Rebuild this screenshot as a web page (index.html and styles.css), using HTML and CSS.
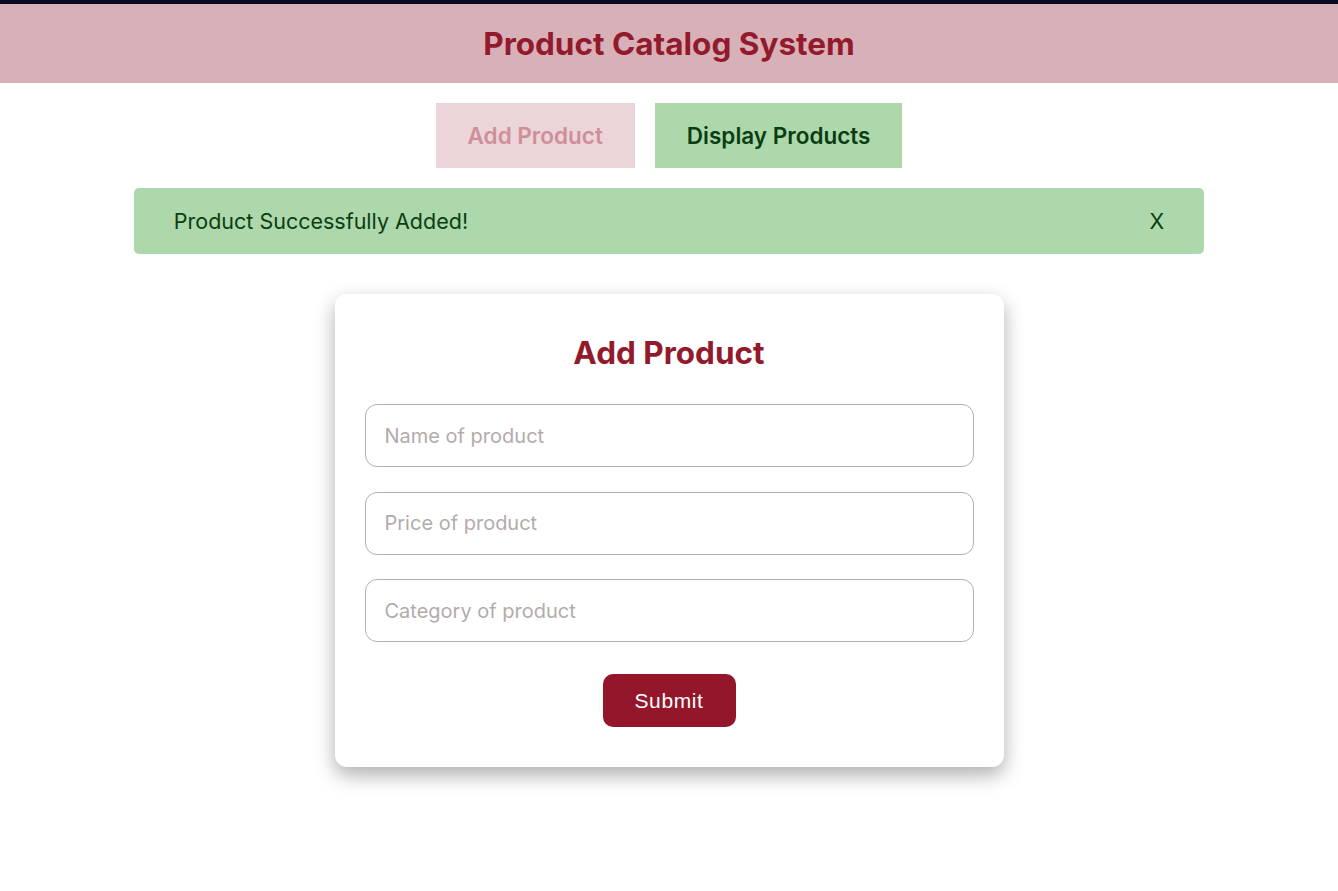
FILE: index.html
```html
<!DOCTYPE html>
<html>
<head>
<meta charset="utf-8">
<title>Product Catalog System</title>
<link rel="stylesheet" href="styles.css">
</head>
<body>
<div class="topline"></div>
<header class="header">
  <h1 class="header-title">Product Catalog System</h1>
</header>
<nav class="nav">
  <button class="nav-btn nav-btn-add">Add Product</button>
  <button class="nav-btn nav-btn-display">Display Products</button>
</nav>
<div class="alert">
  <span class="alert-text">Product Successfully Added!</span>
  <span class="alert-close">X</span>
</div>
<main class="card">
  <h2 class="card-title">Add Product</h2>
  <form class="form">
    <input class="field" type="text" placeholder="Name of product">
    <input class="field" type="text" placeholder="Price of product">
    <input class="field" type="text" placeholder="Category of product">
    <button class="submit" type="button">Submit</button>
  </form>
</main>
</body>
</html>
```
FILE: styles.css
```css
* { box-sizing: border-box; }
html, body { margin: 0; padding: 0; background: #fff; }
body { font-family: Inter, "Noto Sans", sans-serif; padding-bottom: 60px; }

.topline { height: 4px; background: #0b0a24; }

.header {
  height: 79px;
  background: #d8b0b7;
  display: flex;
  align-items: center;
  justify-content: center;
}
.header-title {
  margin: 0;
  font-size: 31.5px;
  font-weight: 700;
  color: #921a2c;
}

.nav {
  display: flex;
  justify-content: center;
  gap: 20px;
  margin-top: 20px;
}
.nav-btn {
  height: 65px;
  border: none;
  font-family: Inter, sans-serif;
  font-size: 22.5px;
  font-weight: 600;
  padding: 0 32px;
}
.nav-btn-add { background: #ebd5d8; color: #cf8e98; }
.nav-btn-display { background: #add8ab; color: #0c3d12; }

.alert {
  width: 80%;
  margin: 20px auto 0;
  height: 66px;
  background: #add8ab;
  border-radius: 5px;
  display: flex;
  align-items: center;
  justify-content: space-between;
  padding: 0 40px;
  color: #0c3d12;
  font-size: 21.5px;
}

.card {
  width: 50%;
  margin: 40px auto 0;
  background: #fff;
  border-radius: 12px;
  box-shadow: 0 8px 20px rgba(0,0,0,0.32);
  padding: 30px 30px 40px;
}
.card-title {
  margin: 11px 0 33px;
  text-align: center;
  font-size: 31.5px;
  font-weight: 700;
  color: #921a2c;
  line-height: 36px;
}
.form {
  display: flex;
  flex-direction: column;
  gap: 24.5px;
}
.field {
  height: 63px;
  border: 1px solid #b4b0b0;
  border-radius: 12px;
  padding: 0 19px;
  font-family: Inter, sans-serif;
  font-size: 20px;
  color: #333;
  outline: none;
}
.field::placeholder { color: #b3abab; }
.submit {
  align-self: center;
  margin-top: 7.5px;
  width: 133px;
  height: 53px;
  border: none;
  border-radius: 10px;
  background: #93162b;
  color: #fff;
  font-family: "Liberation Sans", Arial, sans-serif;
  font-size: 21px;
  letter-spacing: 0.6px;
}
```
